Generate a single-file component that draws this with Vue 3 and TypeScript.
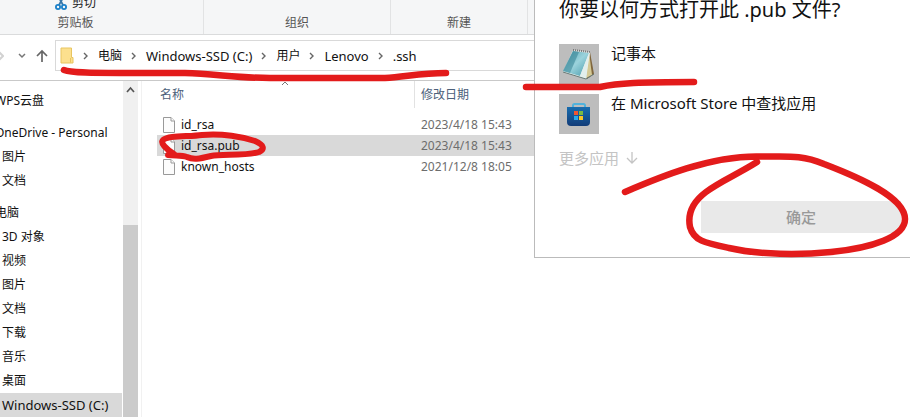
<script setup lang="ts">
import { ref } from 'vue'

interface NavItem {
  label: string
  root?: boolean
  spaced?: boolean
}

interface FileRow {
  name: string
  date: string
}

const crumbs: string[] = ['电脑', 'Windows-SSD (C:)', '用户', 'Lenovo', '.ssh']

const navItems: NavItem[] = [
  { label: 'WPS云盘', root: true },
  { label: 'OneDrive - Personal', root: true, spaced: true },
  { label: '图片' },
  { label: '文档' },
  { label: '电脑', root: true, spaced: true },
  { label: '3D 对象' },
  { label: '视频' },
  { label: '图片' },
  { label: '文档' },
  { label: '下载' },
  { label: '音乐' },
  { label: '桌面' },
  { label: 'Windows-SSD (C:)' },
]

const files: FileRow[] = [
  { name: 'id_rsa', date: '2023/4/18 15:43' },
  { name: 'id_rsa.pub', date: '2023/4/18 15:43' },
  { name: 'known_hosts', date: '2021/12/8 18:05' },
]

const activeNav = ref(navItems.length - 1)
const activeFile = ref(1)

// Latin-only labels are set one pixel larger than Chinese ones.
const isLatin = (text: string): boolean => /^[\x20-\x7e]+$/.test(text)
</script>

<template>
  <div class="screen">
    <main class="explorer">
      <header class="ribbon">
        <section class="group clipboard">
          <button class="cut" type="button">
            <svg width="12" height="16" viewBox="0 0 12 16" fill="none" stroke="#1b80c8" stroke-width="1.8">
              <path d="M3 1 8 10M9 1 4 10" stroke="#3a78a8" />
              <circle cx="3" cy="12" r="2.100" />
              <circle cx="9" cy="12" r="2.100" />
            </svg>
            <span>剪切</span>
          </button>
          <span class="group-name">剪贴板</span>
        </section>
        <section class="group"><span class="group-name">组织</span></section>
        <section class="group"><span class="group-name">新建</span></section>
      </header>

      <div class="toolbar">
        <button class="tool forward" type="button" aria-label="前进">
          <svg width="4" height="12" viewBox="0 0 4 12" fill="none" stroke="#d2d2d2" stroke-width="2"><path d="M-2 1 3 6-2 11" /></svg>
        </button>
        <button class="tool recent" type="button" aria-label="最近位置">
          <svg width="8" height="6" viewBox="0 0 8 6" fill="none" stroke="#777" stroke-width="1.5"><path d="M1 1 4 4 7 1" /></svg>
        </button>
        <button class="tool" type="button" aria-label="向上">
          <svg width="12" height="14" viewBox="0 0 12 14" fill="none" stroke="#666" stroke-width="1.7"><path d="M6 13V2M1 7 6 2 11 7" /></svg>
        </button>
        <nav class="address" aria-label="路径">
          <svg class="folder" width="14" height="17" viewBox="0 0 14 17">
            <path d="M1 1H11.500V10.500H13V16H1Z" fill="#fce08e" stroke="#e8c560" />
            <path d="M10.500 11V15.500" stroke="#e8c560" />
          </svg>
          <template v-for="crumb in crumbs" :key="crumb">
            <svg class="sep" width="6" height="8" viewBox="0 0 6 8" fill="none" stroke="#666" stroke-width="1.4"><path d="M1 1 4 4 1 7" /></svg>
            <a href="#" :class="{ latin: isLatin(crumb) }">{{ crumb }}</a>
          </template>
        </nav>
      </div>

      <div class="body">
        <nav class="tree" aria-label="导航">
          <a
            v-for="(item, i) in navItems"
            :key="i"
            href="#"
            :class="{ root: item.root, spaced: item.spaced, latin: !item.root && isLatin(item.label), active: i === activeNav }"
            @click.prevent="activeNav = i"
          >{{ item.label }}</a>
        </nav>
        <div class="scrollbar">
          <svg width="16" height="18" viewBox="0 0 16 18" fill="none" stroke="#555" stroke-width="1.7"><path d="M4 11 7.500 7 11 11" /></svg>
          <div class="thumb"></div>
        </div>
        <div class="files">
          <table>
            <colgroup><col class="name-col" /><col /></colgroup>
            <thead>
              <tr>
                <th>
                  <div class="head first">
                    名称
                    <svg class="sort" width="8" height="5" viewBox="0 0 8 5" fill="none" stroke="#777"><path d="M1 4 4 1 7 4" /></svg>
                  </div>
                </th>
                <th><div class="head">修改日期</div></th>
              </tr>
            </thead>
            <tbody>
              <tr v-for="(file, i) in files" :key="file.name" :class="{ active: i === activeFile }" @click="activeFile = i">
                <td>
                  <div class="file">
                    <svg width="12" height="16" viewBox="0 0 12 16" fill="#fcfcfc" stroke="#999">
                      <path d="M.5.5H8L11.500 4V15.500H.5Z" />
                      <path d="M8 .5V4H11.500" />
                    </svg>
                    {{ file.name }}
                  </div>
                </td>
                <td class="date">{{ file.date }}</td>
              </tr>
            </tbody>
          </table>
        </div>
      </div>
    </main>

    <section class="dialog" role="dialog" aria-labelledby="open-title">
      <h1 id="open-title">你要以何方式打开此 .pub 文件?</h1>
      <button class="app" type="button">
        <svg width="40" height="40" viewBox="0 0 40 40">
          <defs>
            <linearGradient id="page" x1="0" y1="0" x2="1" y2="1">
              <stop offset="0" stop-color="#4e9cab" />
              <stop offset=".5" stop-color="#9bd3dc" />
              <stop offset="1" stop-color="#4699aa" />
            </linearGradient>
          </defs>
          <rect width="40" height="40" fill="#bdbdbd" />
          <path d="M31 8 35 30 28 35Z" fill="#80673e" />
          <path d="M30 8 33 31 27 34Z" fill="#d4c995" />
          <path d="M14 6 31 8 27 35 4 28Z" fill="#e8f2f0" />
          <path d="M14 7 30 9 21 32 4 27Z" fill="url(#page)" />
          <path d="M14 7 20 8 11 29 4 27Z" fill="#337f91" opacity=".55" />
          <path d="M30 9 21 32 27 34Z" fill="#e2eeec" />
          <path d="M14 6 31 8" stroke="#777" stroke-width="2" stroke-dasharray="1 1" />
          <path d="M4 28 27 35 35 30" fill="none" stroke="#687a76" />
        </svg>
        <span>记事本</span>
      </button>
      <button class="app" type="button">
        <svg width="40" height="40" viewBox="0 0 40 40">
          <defs>
            <linearGradient id="bag" x1="0" y1="0" x2="0" y2="1">
              <stop offset="0" stop-color="#176cae" />
              <stop offset="1" stop-color="#123c78" />
            </linearGradient>
          </defs>
          <rect width="40" height="40" fill="#bdbdbd" />
          <path d="M14 14V11.500Q14 10 15.500 10H24.500Q26 10 26 11.500V14" fill="none" stroke="#50b2dc" stroke-width="2" />
          <path d="M8 13H31V28Q31 32 27 32H12Q8 32 8 28Z" fill="url(#bag)" />
          <path d="M15 17H19V21H15Z" fill="#ee5631" />
          <path d="M20 17H24V21H20Z" fill="#78b943" />
          <path d="M15 22H19V26H15Z" fill="#28a8e8" />
          <path d="M20 22H24V26H20Z" fill="#fbc526" />
        </svg>
        <span>在 Microsoft Store 中查找应用</span>
      </button>
      <button class="more" type="button">
        更多应用
        <svg width="12" height="14" viewBox="0 0 12 14" fill="none" stroke="#c4c4c4" stroke-width="1.3"><path d="M6 1V12M1 7 6 12 11 7" /></svg>
      </button>
      <button class="confirm" type="button" disabled>确定</button>
    </section>

    <svg class="marks" width="910" height="418" viewBox="0 0 910 418" fill="none" stroke="#e31b1b" stroke-linecap="round" stroke-linejoin="round" aria-hidden="true">
      <path d="M64 70C72 73 95 73 120 73H185C215 74 240 78 270 78H385C405 77 420 73 446 73" stroke-width="6.500" />
      <path d="M526 87H600C618 83 640 82 694 82" stroke-width="6.500" />
      <path d="M174 154C166 149 160 143 163 140C169 135 189 137 202 135C222 133 243 137 255 141C264 145 265 149 259 152C247 156 222 154 211 156C199 159 193 160 187 157C181 155 176 156 168 155" stroke-width="6" />
      <path d="M625 192C660 177 710 156 758 156.500C785 157 800 154 824 164C858 177 905 197 905 219C905 237 872 248 831 252C800 255 760 255 729 248C705 243 694 241 690 227C687 212 694 201 706 192C719 182 738 174 757 162" stroke-width="6.500" />
    </svg>
  </div>
</template>

<style>
body {
  margin: 0;
  background: #fff;
}
</style>

<style scoped>
.screen {
  position: relative;
  overflow: hidden;
  min-height: 100vh;
  font-family: "Noto Sans", "Noto Sans CJK SC", sans-serif;
  font-size: 12px;
  line-height: 20px;
  color: #111;
}

button {
  display: flex;
  align-items: center;
  padding: 0;
  border: 0;
  background: none;
  color: inherit;
  font: inherit;
}

a {
  color: inherit;
  text-decoration: none;
}

svg {
  display: block;
  flex: none;
}

.latin {
  font-size: 13px;
}

.ribbon {
  display: grid;
  grid-template-columns: 204px 187px 137px 1fr;
  grid-template-rows: 34px;
  overflow: hidden;
  background: #f5f6f7;
  border-bottom: 1px solid #dadbdc;
}

.group {
  display: flex;
  flex-direction: column;
  align-items: center;
  justify-content: flex-end;
  padding-bottom: 1px;
  border-right: 1px solid #e2e3e4;
  color: #555;
}

.clipboard {
  padding-right: 52px;
}

.cut {
  gap: 5px;
  color: #222;
}

.toolbar {
  display: flex;
  align-items: center;
  padding: 5px 0 9px;
  border-bottom: 1px solid #c9c9c9;
}

.forward {
  width: 18px;
}

.recent {
  width: 18px;
}

.address {
  display: flex;
  flex: 1;
  align-items: center;
  height: 29px;
  margin-left: 7px;
  padding-left: 4px;
  border: 1px solid #d9d9d9;
  white-space: nowrap;
}

.sep {
  margin: 0 9px;
}

.body {
  display: flex;
}

.tree {
  display: flex;
  flex-direction: column;
  width: 122px;
  padding-top: 8px;
  white-space: nowrap;
}

.tree a {
  padding-left: 2px;
  line-height: 24px;
}

.tree .root {
  margin-left: -7px;
}

.tree .spaced {
  margin-top: 8px;
}

.tree .active {
  background: #d9d9d9;
}

.scrollbar {
  display: flex;
  flex-direction: column;
  width: 15px;
  margin-left: 1px;
  background: #f0f0f0;
}

.thumb {
  flex: 1;
  margin-top: 126px;
  background: #cbcbcb;
}

.files {
  flex: 1;
  margin-left: 3px;
  padding-left: 15px;
  border-left: 1px solid #f1f1f1;
}

table {
  width: 100%;
  table-layout: fixed;
  border-collapse: collapse;
}

.name-col {
  width: 258px;
}

th,
td {
  padding: 0;
  text-align: left;
  font-weight: 400;
}

th {
  padding-bottom: 6px;
  color: #4c607a;
}

.head {
  position: relative;
  padding-left: 6px;
  line-height: 27px;
}

.first {
  padding-left: 3px;
  border-right: 1px solid #e2e2e2;
}

.sort {
  position: absolute;
  top: 0;
  left: 124px;
}

td {
  height: 21px;
}

tr.active {
  background: #d9d9d9;
}

.file {
  display: flex;
  align-items: center;
  gap: 6px;
  padding-left: 6px;
}

.date {
  padding-left: 6px;
  color: #6d6d6d;
}

.dialog {
  position: absolute;
  top: 0;
  right: 0;
  box-sizing: border-box;
  width: 376px;
  height: 258px;
  padding: 0 9px 24px 24px;
  display: flex;
  flex-direction: column;
  align-items: flex-start;
  background: #fff;
  border-left: 1px solid #bbb;
  border-bottom: 1px solid #bbb;
  font-size: 15px;
}

h1 {
  margin: 0 0 24px;
  font-size: 20px;
  line-height: 20px;
  font-weight: 400;
}

.app {
  align-items: flex-start;
  gap: 12px;
  margin-bottom: 10px;
  line-height: 18px;
}

.more {
  gap: 7px;
  margin-top: 4px;
  color: #c4c4c4;
}

.confirm {
  align-self: flex-end;
  justify-content: center;
  width: 200px;
  height: 32px;
  margin-top: auto;
  background: #e9e9e9;
  color: #999;
  font-weight: 500;
}

.marks {
  position: absolute;
  top: 0;
  left: 0;
  pointer-events: none;
}
</style>
